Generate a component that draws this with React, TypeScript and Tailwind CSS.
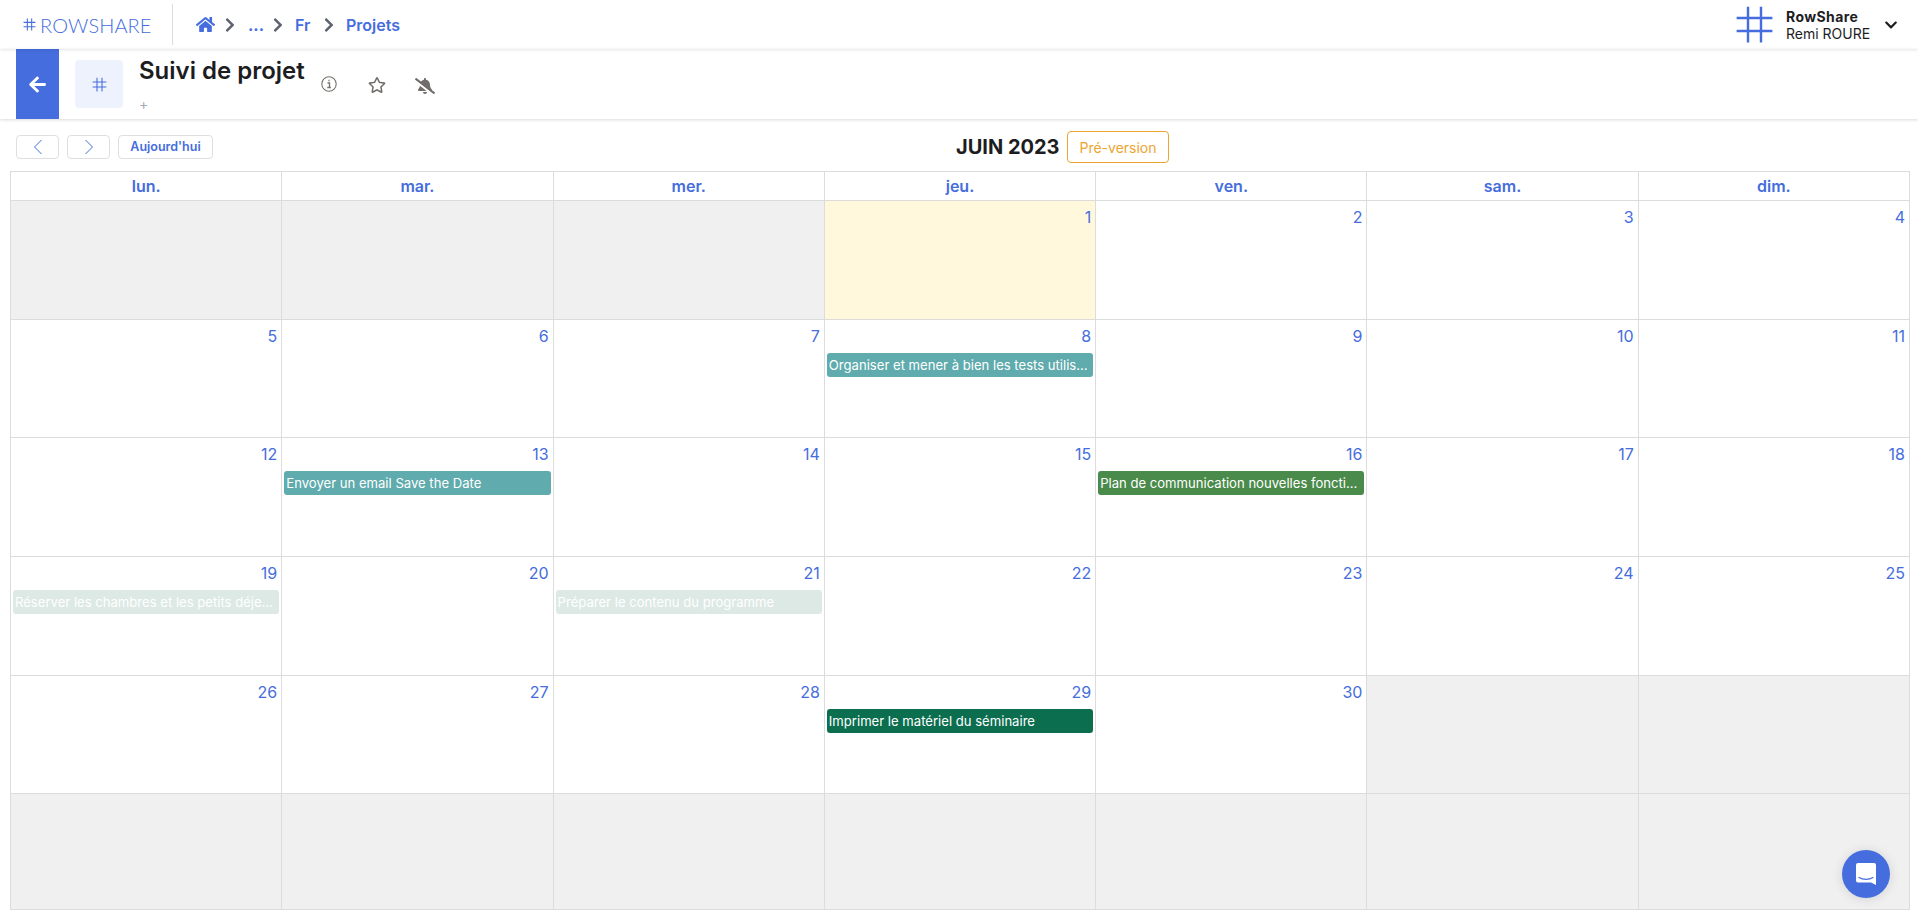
import React from "react";
import { FaHome, FaChevronRight, FaRegStar, FaBellSlash, FaArrowLeft, FaChevronDown } from "react-icons/fa";

const days = ["lun.", "mar.", "mer.", "jeu.", "ven.", "sam.", "dim."];

type CellData = {
  day?: number;
  today?: boolean;
  event?: { label: string; bg: string };
};

const teal = "bg-[#5fabad]";

const cells: CellData[] = [
  {}, {}, {},
  { day: 1, today: true }, { day: 2 }, { day: 3 }, { day: 4 },
  { day: 5 }, { day: 6 }, { day: 7 },
  { day: 8, event: { label: "Organiser et mener à bien les tests utilisateurs", bg: teal } },
  { day: 9 }, { day: 10 }, { day: 11 },
  { day: 12 },
  { day: 13, event: { label: "Envoyer un email Save the Date", bg: teal } },
  { day: 14 }, { day: 15 },
  { day: 16, event: { label: "Plan de communication nouvelles fonctionnalités", bg: "bg-[#4a8a4a]" } },
  { day: 17 }, { day: 18 },
  { day: 19, event: { label: "Réserver les chambres et les petits déjeuners", bg: "bg-[#dde9e5]" } },
  { day: 20 },
  { day: 21, event: { label: "Préparer le contenu du programme", bg: "bg-[#dde9e5]" } },
  { day: 22 }, { day: 23 }, { day: 24 }, { day: 25 },
  { day: 26 }, { day: 27 }, { day: 28 },
  { day: 29, event: { label: "Imprimer le matériel du séminaire", bg: "bg-[#0b6e4f]" } },
  { day: 30 }, {}, {},
  {}, {}, {}, {}, {}, {}, {},
];

function Hash({ size, width, className }: { size: number; width: number; className?: string }) {
  return (
    <svg width={size} height={size} viewBox="0 0 24 24" className={className} fill="none" stroke="#456ddd" strokeWidth={width}>
      <path d="M8 1v22M16 1v22M1 8h22M1 16h22" />
    </svg>
  );
}

function InfoIcon() {
  return (
    <svg width="16" height="16" viewBox="0 0 16 16" fill="none">
      <circle cx="8" cy="8" r="7.2" stroke="#77736e" strokeWidth="1.1" />
      <path d="M6.5 7h2v4.2M6.3 11.5h3.6M7.4 4.5h1.2" stroke="#77736e" strokeWidth="1.3" />
    </svg>
  );
}

function Crumb() {
  return <FaChevronRight className="text-[16px] text-[#5d6270]" />;
}

function Cell({ data }: { data: CellData }) {
  const bg = data.day === undefined ? "bg-[#f0f0f0]" : data.today ? "bg-[#fff8dd]" : "bg-white";
  return (
    <div className={`${bg} border-r border-b border-[#dcdcdc] min-w-0 px-[2px]`}>
      {data.day !== undefined && (
        <div className="h-[33px] pt-[4px] pr-[2px] text-right text-[16px] leading-[24px] text-[#456ddd]">{data.day}</div>
      )}
      {data.event && (
        <div className={`${data.event.bg} h-[24px] rounded-[3px] px-[2px] text-[13.1px] leading-[24px] text-white truncate`}>
          {data.event.label}
        </div>
      )}
    </div>
  );
}

export default function App() {
  return (
    <div className="relative h-[916px] overflow-hidden bg-white font-['Inter',sans-serif] text-[#1d1d1f]">
      <header className="relative z-10 flex h-[49px] items-center shadow-[0_1px_3px_rgba(0,0,0,0.1)]">
        <div className="flex w-[172px] items-center pl-[23px] text-[#456ddd]">
          <Hash size={13} width={2} className="mr-[4px]" />
          <span className="font-['Lato',sans-serif] text-[20px] font-light leading-none tracking-[0.1px]">ROWSHARE</span>
        </div>
        <div className="h-[41px] w-px bg-[#dcdcdc]" />
        <nav className="ml-[23px] flex items-center text-[16px] font-semibold text-[#456ddd]">
          <FaHome className="text-[19px]" />
          <span className="ml-[7px]"><Crumb /></span>
          <span className="ml-[10px] w-[22px] font-bold">...</span>
          <Crumb />
          <span className="ml-[9px] w-[16px]">Fr</span>
          <span className="ml-[10px]"><Crumb /></span>
          <span className="ml-[9px]">Projets</span>
        </nav>
        <div className="ml-auto flex items-center pr-[20px]">
          <Hash size={39} width={1.5} />
          <div className="ml-[12px] w-[85px] whitespace-nowrap text-[14px] leading-[17px]">
            <div className="font-bold tracking-[0.4px]">RowShare</div>
            <div>Remi ROURE</div>
          </div>
          <FaChevronDown className="ml-[13px] text-[14px]" />
        </div>
      </header>

      <section className="flex h-[70px] pl-4 shadow-[0_1px_3px_rgba(0,0,0,0.15)]">
        <div className="flex h-[70px] w-[43px] items-center justify-center bg-[#456ddd] text-[19px] text-white">
          <FaArrowLeft />
        </div>
        <div className="ml-[16px] mt-[11px] flex h-[48px] w-[48px] items-center justify-center rounded-[4px] bg-[#eef2fc]">
          <Hash size={15} width={1.7} />
        </div>
        <div className="ml-[16px] w-[166px]">
          <div className="mt-[5px] whitespace-nowrap text-[24px] font-semibold leading-[34px]">Suivi de projet</div>
          <div className="mt-[8px] text-[14px] leading-[16px] text-[#a9a9b5]">+</div>
        </div>
        <div className="ml-[16px] mt-[27px] flex items-start">
          <InfoIcon />
          <FaRegStar className="ml-[31px] text-[18px] text-[#706d6a]" />
          <FaBellSlash className="ml-[29px] text-[20px] text-[#706d6a]" />
        </div>
      </section>

      <div className="flex h-[52px] items-center pl-4 pt-[4px]">
        <button className="flex h-[24px] w-[43px] items-center justify-center rounded-[4px] border border-[#dfdfdf]">
          <svg width="10" height="16" viewBox="0 0 10 16" fill="none" stroke="#456ddd"><path d="M8.5 1 1.5 8l7 7" /></svg>
        </button>
        <button className="ml-[8px] flex h-[24px] w-[43px] items-center justify-center rounded-[4px] border border-[#dfdfdf]">
          <svg width="10" height="16" viewBox="0 0 10 16" fill="none" stroke="#456ddd"><path d="M1.5 1l7 7-7 7" /></svg>
        </button>
        <button className="ml-[8px] flex h-[24px] w-[95px] items-center justify-center rounded-[4px] border border-[#dfdfdf] text-[12.5px] font-semibold text-[#456ddd]">
          Aujourd'hui
        </button>
        <div className="ml-[743px] w-[103px] whitespace-nowrap text-[20px] font-bold">JUIN 2023</div>
        <div className="ml-[8px] flex h-[32px] w-[102px] items-center justify-center rounded-[4px] border border-[#eda52f] text-[14px] text-[#eda52f]">
          Pré-version
        </div>
      </div>

      <div className="ml-[10px] w-[1900px] border-l border-t border-[#dcdcdc]">
        <div className="grid h-[29px] grid-cols-7">
          {days.map((d) => (
            <div key={d} className="flex items-center justify-center border-r border-b border-[#dcdcdc] text-[16px] font-semibold text-[#456ddd]">
              {d}
            </div>
          ))}
        </div>
        <div className="grid grid-cols-7 grid-rows-[repeat(5,118.7px)_116px]">
          {cells.map((c, i) => (
            <Cell key={i} data={c} />
          ))}
        </div>
      </div>

      <button className="absolute bottom-[18px] right-[28px] flex h-[48px] w-[48px] items-center justify-center rounded-full bg-[#456ddd] shadow-[0_1px_12px_rgba(0,0,0,0.12)]">
        <svg width="22" height="24" viewBox="0 0 22 24" fill="none">
          <path d="M3 1h16a2 2 0 0 1 2 2v20l-5-2.5H3a2 2 0 0 1-2-2V3a2 2 0 0 1 2-2z" fill="white" />
          <path d="M4 15.5c4 2.5 10 2.5 14 0" stroke="#456ddd" strokeWidth="1.2" strokeLinecap="round" />
        </svg>
      </button>
    </div>
  );
}
